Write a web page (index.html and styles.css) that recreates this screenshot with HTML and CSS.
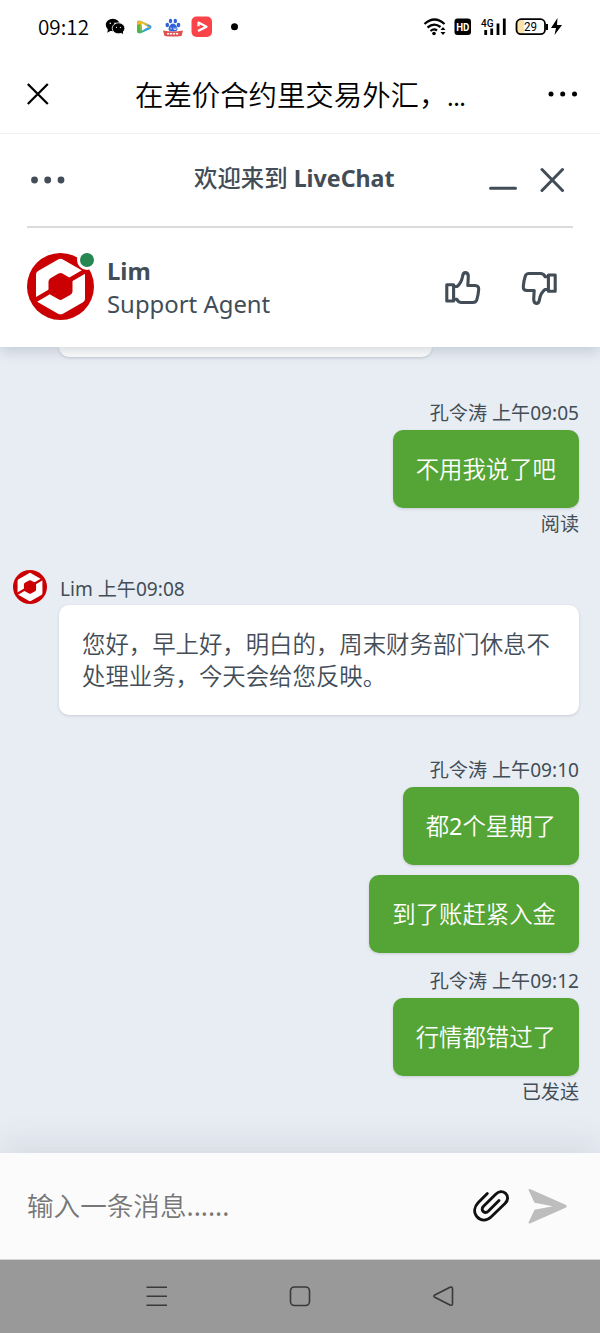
FILE: index.html
```html
<!DOCTYPE html>
<html lang="zh-CN">
<head>
<meta charset="utf-8">
<title>LiveChat</title>
<link rel="stylesheet" href="styles.css">
</head>
<body>
<svg class="defs" width="0" height="0" aria-hidden="true">
  <symbol id="logo" viewBox="0 0 67 67">
    <circle cx="33.500" cy="33.500" r="33.500" fill="#cb0003"/>
    <path d="M31.500 6.300Q33.500 5 35.500 6.300L56 18Q58 19.200 58 21.500V46Q58 48 56 49.200L36 60.700Q33.500 62 31 60.700L11 49.200Q9 48 9 46V21.500Q9 19.200 11 18Z" fill="#fff"/>
    <path d="M8 47.200L59 17.400" stroke="#cb0003" stroke-width="4.600"/>
    <path d="M31.500 20.600Q33.500 19.400 35.500 20.600L43.500 25.200Q45.500 26.400 45.500 28.500V38.500Q45.500 40.500 43.500 41.700L35.500 46.300Q33.500 47.500 31.500 46.300L23.500 41.700Q21.500 40.500 21.500 38.500V28.500Q21.500 26.400 23.500 25.200Z" fill="#cb0003"/>
  </symbol>
  <symbol id="thumb" viewBox="0 0 36 34">
    <g fill="none" stroke="#424d57" stroke-width="3.100" stroke-linejoin="round" stroke-linecap="round">
      <path d="M1.800 13.700H8.600V30H1.800Z"/>
      <path d="M9.500 15.500H12Q16.500 12 17.500 5.500Q18 1.600 20.500 1.600Q23.500 1.900 23.300 6L22.800 14.500H30Q34 14.700 33.700 18.500Q33.300 24 31.700 29Q30.800 31.500 28 31.500H16Q13 31.200 11.800 28.200H9.500"/>
    </g>
  </symbol>
</svg>

<header class="status">
  <span class="clock">09:12</span>
  <svg class="apps" width="140" height="26" viewBox="102 14 140 26">
    <ellipse cx="112.800" cy="25" rx="7" ry="6.200"/><path d="M108 29L107.300 32.800L112 30Z"/>
    <ellipse cx="118.500" cy="28.300" rx="6.300" ry="5.500" stroke="#fff" stroke-width=".8"/><path d="M120.500 32L123 34.300V31Z"/>
    <g fill="#fff"><circle cx="110.300" cy="23.300" r=".8"/><circle cx="115" cy="23.300" r=".8"/><circle cx="116.500" cy="27.300" r=".6"/><circle cx="120.500" cy="27.300" r=".6"/></g>
    <path d="M137 23Q137 19.500 141 21L150 25Q153 27 150 29L141 33Q137 34.500 137 31Z" fill="#35a9e8"/>
    <path d="M137 24Q137 19.500 141 21L150 25.200Q152 27 149 28L142 24L140 31L137.500 30Z" fill="#f5b91f"/>
    <path d="M137 25L140.500 24V31L149 28.500L141 33Q137.500 34 137 30Z" fill="#4fb948"/>
    <path d="M143 31L150 27.500L145 24.500L150 25.300Q152.500 27 150 29L142 32.500Z" fill="#369ee5"/>
    <path d="M141.800 23.300L148 27L141.800 30.700Z" fill="#fff"/>
    <g fill="#2f62d8"><ellipse cx="167.300" cy="25" rx="1.800" ry="2.200"/><ellipse cx="170.500" cy="21" rx="1.700" ry="2.300"/><ellipse cx="175.300" cy="21" rx="1.700" ry="2.300"/><ellipse cx="178.500" cy="25" rx="1.800" ry="2.200"/><path d="M173 23.500Q175.500 23.500 177 27Q179 31.500 173 31.500Q167 31.500 169 27Q170.500 23.500 173 23.500Z"/></g>
    <path d="M171 27.500V29.500M174 27.500V29.500H176V27.500" fill="none" stroke="#fff" stroke-width=".8"/>
    <path d="M163 30.500Q173 32.500 183 30.500L181.500 36Q173 37 164.500 36Z" fill="#df5050"/>
    <path d="M167 33.800H179" stroke="#fff" stroke-width="1.600" stroke-dasharray="2.200 .8"/>
    <rect x="191.500" y="16.500" width="20.500" height="20.500" rx="5" fill="#fb4449"/>
    <path d="M198 31L206.500 26.700L198 22.300M198.500 22V26.300" fill="none" stroke="#fff" stroke-width="2.200" stroke-linejoin="round"/>
    <circle cx="234.500" cy="26.700" r="3.500"/>
  </svg>
  <svg class="signals" width="142" height="26" viewBox="422 14 142 26">
    <g fill="none" stroke="#000" stroke-width="2.300"><path d="M424.500 24Q434.500 15 444.500 24"/><path d="M427.500 27.500Q434 22 440.500 27"/><path d="M430.500 31Q434 28 437 30.500"/></g>
    <circle cx="434" cy="33.500" r="1.800"/><path d="M440.500 30L443 27L445.500 30ZM440.500 32L443 35L445.500 32Z"/>
    <rect x="454.500" y="18.500" width="16.500" height="16.500" rx="3"/>
    <text x="456.200" y="31" class="hd" textLength="13.200" lengthAdjust="spacingAndGlyphs">HD</text>
    <text x="481" y="26.500" class="net" textLength="12.500" lengthAdjust="spacingAndGlyphs">4G</text>
    <path d="M485.700 30V35M491.700 28.500V35M498 23.500V35M504.300 18.500V35" stroke="#000" stroke-width="2.800"/>
    <path d="M517 20H524V33.500H517Z" fill="#fbe3a9"/>
    <rect x="516.500" y="19.200" width="28.500" height="15" rx="4.500" fill="none" stroke="#000" stroke-width="1.800"/>
    <path d="M547 24V30" stroke="#000" stroke-width="2"/>
    <text x="524" y="31" class="pct" textLength="13" lengthAdjust="spacingAndGlyphs">29</text>
    <path d="M557.500 18L551 28H556L554.500 35L562 25H557Z"/>
  </svg>
</header>

<nav class="titlebar">
  <svg width="22" height="22" viewBox="0 0 22 22"><path d="M.8 1L20.800 21M20.800 1L.8 21" stroke="#000" stroke-width="2.300"/></svg>
  <h1 class="title">在差价合约里交易外汇，<span class="ellipsis">...</span></h1>
  <svg width="30" height="6" viewBox="0 0 30 6"><circle cx="3" cy="3" r="2.500"/><circle cx="14.700" cy="3" r="2.500"/><circle cx="26.500" cy="3" r="2.500"/></svg>
</nav>

<section class="chat-head">
  <div class="welcome">
    <svg width="36" height="8" viewBox="0 0 36 8" fill="#424d57"><circle cx="4.500" cy="4" r="3.400"/><circle cx="17.700" cy="4" r="3.400"/><circle cx="31" cy="4" r="3.400"/></svg>
    <h2 class="welcome-text">欢迎来到 <b>LiveChat</b></h2>
    <svg width="78" height="26" viewBox="488 167 78 26" stroke="#424d57" stroke-width="3" stroke-linecap="round"><path d="M490.500 188.300H515.500M542 169.500L562.500 190.500M562.500 169.500L542 190.500"/></svg>
  </div>
  <div class="agent">
    <div class="avatar"><svg width="67" height="67"><use href="#logo"/></svg><i class="online"></i></div>
    <div class="agent-info"><strong>Lim</strong><span>Support Agent</span></div>
    <svg class="vote" width="36" height="34"><use href="#thumb"/></svg>
    <svg class="vote down" width="36" height="34"><use href="#thumb"/></svg>
  </div>
</section>

<main class="messages">
  <div class="clipped"></div>
  <div class="meta first">孔令涛 上午09:05</div>
  <div class="bubble own">不用我说了吧</div>
  <div class="receipt">阅读</div>
  <div class="incoming">
    <svg width="34" height="34"><use href="#logo"/></svg>
    <div class="incoming-body">
      <div class="from">Lim 上午09:08</div>
      <div class="bubble reply">您好，早上好，明白的，周末财务部门休息不<br>处理业务，今天会给您反映。</div>
    </div>
  </div>
  <div class="meta second">孔令涛 上午09:10</div>
  <div class="bubble own">都<span class="latin">2</span>个星期了</div>
  <div class="bubble own next">到了账赶紧入金</div>
  <div class="meta third">孔令涛 上午09:12</div>
  <div class="bubble own">行情都错过了</div>
  <div class="receipt">已发送</div>
</main>

<footer class="composer">
  <span class="placeholder">输入一条消息<span class="latin">......</span></span>
  <svg width="38" height="34" viewBox="472 1190 38 34"><path d="M487.300 1194.500L478.300 1203.500C474 1208 473.500 1213.500 477 1217.800C481 1222.300 486.700 1222 491 1218L505 1204.500C508.500 1201 508.300 1197 505.500 1194.300C502.500 1191.800 498.700 1192.200 495.700 1195.200L483.500 1207.300C481.700 1209.200 481.900 1211.400 483.300 1212.500C484.800 1213.700 486.900 1213.500 488.500 1212L499 1201.500" fill="none" stroke="#111" stroke-width="2.900" stroke-linecap="round"/></svg>
  <svg width="40" height="36" viewBox="527 1188 40 36"><path d="M528.500 1190Q528.500 1188.500 530.500 1189.300L565.500 1204.800Q568 1206.300 565.500 1207.800L530.500 1223.300Q528.500 1224 528.500 1222.500L534.500 1209.700L553 1206.300L534.500 1202.700Z" fill="#bdbdbd"/></svg>
</footer>
<nav class="system">
  <svg width="600" height="73" viewBox="0 1260 600 73" fill="none" stroke="#393939" stroke-width="1.600" stroke-linejoin="round"><path d="M146.500 1287.200H167M146.500 1296.300H167M146.500 1305.300H167"/><rect x="290.500" y="1287" width="19" height="18.500" rx="4"/><path d="M434.800 1295L450 1287.200Q452.500 1286.300 452.500 1289V1303.500Q452.500 1306 450 1305L434.800 1297.300Q433 1296.200 434.800 1295Z"/></svg>
</nav>
</body>
</html>
```
FILE: styles.css
```css
* { box-sizing: border-box; }
body {
  margin: 0;
  width: 600px;
  height: 1333px;
  display: flex;
  flex-direction: column;
  overflow: hidden;
  background: #fff;
  color: #424d57;
  font-family: "Noto Sans", "Noto Sans CJK SC", sans-serif;
  font-size: 23.4px;
}
svg { display: block; flex: none; }
.defs { position: absolute; }
h1, h2 { margin: 0; font-weight: inherit; }
.latin { font-weight: 400; }

.status {
  height: 54px;
  padding: 0 36px 0 38px;
  display: flex;
  align-items: center;
  color: #000;
}
.clock {
  width: 64px;
  font: 350 20.7px/24px "Noto Sans CJK SC", sans-serif;
  padding-bottom: 2px;
}
.signals { margin-left: auto; }
.hd { font: 700 11px Roboto, sans-serif; fill: #fff; }
.net { font: 500 10px Roboto, sans-serif; }
.pct { font: 12px Roboto, sans-serif; }

.titlebar {
  height: 80px;
  padding: 0 22px 0 27px;
  display: flex;
  align-items: center;
  border-bottom: 1px solid #f0f0f0;
  color: #000;
}
.title {
  flex: 1;
  margin-left: 86px;
  padding-top: 3px;
  font: 350 28.4px/40px "Noto Sans CJK SC", sans-serif;
  white-space: nowrap;
}
.ellipsis { font-size: 20.5px; font-weight: 500; }

.chat-head {
  height: 213px;
  padding: 0 27px;
  position: relative;
  z-index: 1;
  box-shadow: 0 5px 12px rgba(60, 80, 100, .2);
  clip-path: inset(0 0 -24px 0);
  background: #fff;
}
.welcome {
  height: 94px;
  padding: 0 7px 0 3px;
  display: flex;
  align-items: center;
  border-bottom: 2px solid #d8dadc;
}
.welcome-text {
  flex: 1;
  padding: 0 0 4px 128px;
  font-size: 23.4px;
  font-weight: 500;
  line-height: 32px;
}
.welcome-text b { font-size: 23.2px; }
.agent {
  height: 117px;
  display: flex;
  align-items: center;
}
.avatar { position: relative; }
.online {
  position: absolute;
  right: -3px;
  top: -3px;
  width: 20px;
  height: 20px;
  border: 3px solid #fff;
  border-radius: 50%;
  background: #268750;
}
.agent-info {
  flex: 1;
  margin: 1px 0 0 13px;
  display: flex;
  flex-direction: column;
  font-size: 23.9px;
  line-height: 33px;
}
.vote { margin: 2px 40px 0 0; }
.vote.down { margin-right: 16px; transform: rotate(180deg); }

.messages {
  height: 806px;
  padding: 0 21px 0 13px;
  display: flex;
  flex-direction: column;
  align-items: flex-end;
  background: #e8edf4;
}
.clipped {
  width: 373px;
  height: 10px;
  margin-left: 46px;
  align-self: flex-start;
  border-radius: 0 0 10px 10px;
  background: #fff;
  box-shadow: 0 1px 3px rgba(0, 0, 0, .15);
}
.meta, .receipt, .from {
  height: 28px;
  font-size: 19.1px;
  line-height: 28px;
  white-space: nowrap;
}
.first { margin-top: 42px; }
.second { margin-top: 41px; }
.third { margin-top: 14px; }
.meta { margin-bottom: 3px; }
.receipt { margin-top: 2px; }
.bubble {
  border-radius: 10px;
  box-shadow: 0 1px 3px rgba(0, 0, 0, .14);
  white-space: nowrap;
  font-weight: 350;
}
.own {
  height: 78px;
  padding: 0 23px;
  line-height: 78px;
  color: #fff;
  background: #55a436;
}
.next { margin-top: 10px; }
.incoming {
  width: 100%;
  margin-top: 32px;
  display: flex;
  gap: 12px;
}
.incoming-body { flex: 1; padding-top: 5px; }
.from { margin-bottom: 2px; padding-left: 1px; }
.reply {
  height: 110px;
  padding: 23px 23px;
  line-height: 32px;
  background: #fff;
}

.composer {
  height: 107px;
  padding: 0 33px 0 27px;
  display: flex;
  align-items: center;
  gap: 17px;
  position: relative;
  z-index: 1;
  background: #fbfbfb;
  border-bottom: 1px solid #d5d5d5;
  box-shadow: 0 -8px 32px rgba(70, 85, 95, .12);
}
.placeholder { flex: 1; padding-bottom: 3px; font-size: 26.6px; font-weight: 350; color: #777; }
.system { height: 73px; background: #999; position: relative; z-index: 2; }
```
